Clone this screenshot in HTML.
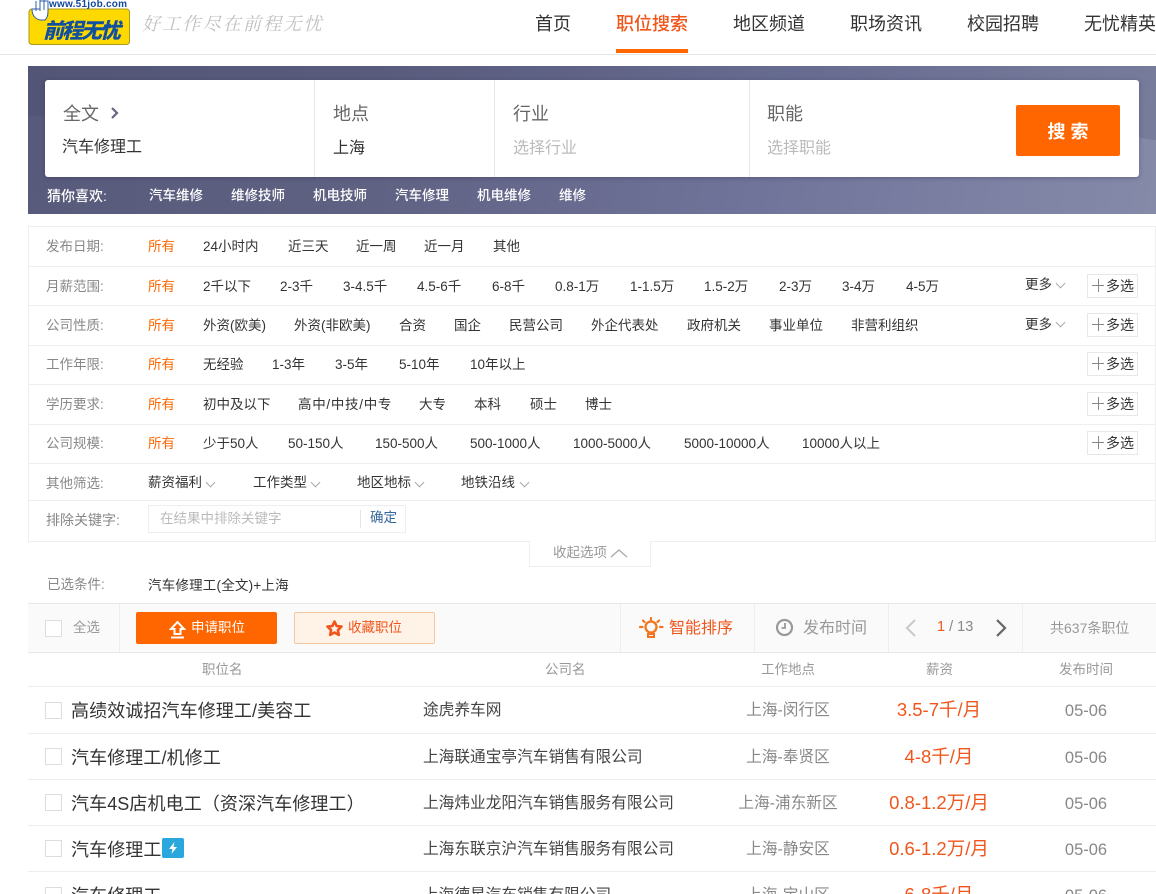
<!DOCTYPE html>
<html lang="zh"><head><meta charset="utf-8"><title>前程无忧</title>
<style>
*{box-sizing:border-box}
html,body{margin:0;padding:0;background:#fff}
html{width:1156px;height:894px;overflow:hidden}
body{position:relative;width:1156px;height:894px;overflow:hidden;font-family:"Liberation Sans","Noto Sans CJK SC",sans-serif;color:#333;font-size:13.5px}
.t{position:absolute;white-space:nowrap;line-height:20px;height:20px}
.c{transform:translateX(-50%)}
.b{position:absolute}
.nav{font-size:18px;top:14px;color:#333}
.l{left:46px;color:#888}
.o{left:148px;color:#f60}
.hl{position:absolute;left:28px;width:1128px;height:1px;background:#eee}
.ms{position:absolute;left:1087px;width:51px;height:24px;border:1px solid #e8e8e8;font-size:14px;line-height:22px;padding-left:18px;color:#333;white-space:nowrap}
.ms:before{content:"";position:absolute;left:4px;top:10px;width:12px;height:1px;background:#888}
.ms:after{content:"";position:absolute;left:9.500px;top:4px;width:1px;height:13px;background:#888}
.cb{position:absolute;left:45px;width:17px;height:17px;border:1px solid #ddd;background:#fff}
.ti{font-size:18px;left:71px;letter-spacing:.1px}
.co{font-size:15.700px;left:423px;color:#444}
.lo{font-size:15.700px;left:788px;color:#888}
.sa{font-size:18.500px;left:939px;color:#f0561c}
.da{font-size:16.500px;left:1086px;color:#888}
.h{color:#999;font-size:13.500px;top:660px}
.ar{position:absolute;width:7px;height:7px;border-right:1px solid #aaa;border-bottom:1px solid #aaa;transform:rotate(45deg)}
.g{top:186px;color:#fff;font-size:13.500px;font-weight:500}
.f{font-size:13.500px}
</style></head><body>

<svg class="b" style="left:28px;top:0" width="104" height="46" viewBox="0 0 104 46">
<rect x="1" y="9" width="100.500" height="35.500" rx="3" fill="#fdd900" stroke="#a99a20"/>
<path d="M4 9c0 6 3 10 8 11h5c2-2 3-4 3-9V1h-8v8z" fill="#fff" stroke="#2f5fa8"/>
<path d="M8 1v10M12 0v11M16 0v10" stroke="#2f5fa8" fill="none"/>
<text x="21" y="7" font-size="10" font-weight="700" fill="#13499a" font-family="Liberation Sans" textLength="78">www.51job.com</text>
<text x="15" y="38" font-size="21" font-weight="900" font-style="italic" fill="#10509f" font-family="Noto Sans CJK SC" textLength="78" lengthAdjust="spacing">前程无忧</text>
</svg>
<div class="t" style="left:142px;top:13px;font-family:'Noto Serif CJK SC',serif;font-size:18px;font-style:italic;letter-spacing:2.200px;color:#bfbfbf">好工作尽在前程无忧</div>

<div class="t nav" style="left:535px">首页</div>
<div class="t nav" style="left:616px;color:#f0561c;font-weight:500">职位搜索</div>
<div class="b" style="left:616px;top:49px;width:72px;height:4px;background:#f60"></div>
<div class="t nav" style="left:733px">地区频道</div>
<div class="t nav" style="left:850px">职场资讯</div>
<div class="t nav" style="left:967px">校园招聘</div>
<div class="t nav" style="left:1084px">无忧精英</div>
<div class="b" style="left:0;top:54px;width:1156px;height:1px;background:#e8e8e8"></div>

<div class="b" style="left:28px;top:66px;width:1128px;height:148px;background:linear-gradient(100deg,#585a7b 0%,#5f6182 30%,#70749a 65%,#868aa9 100%)"></div>
<svg class="b" style="left:28px;top:66px" width="1128" height="148"><polygon points="0,0 1128,0 1128,74 1050,64 0,50" fill="#3f4062" opacity=".18"/></svg>
<div class="b" style="left:45px;top:80px;width:1094px;height:97px;background:#fff;border-radius:3px;box-shadow:0 1px 5px rgba(40,40,70,.35)"></div>
<div class="b" style="left:314px;top:80px;width:1px;height:97px;background:#e6e6e6"></div>
<div class="b" style="left:494px;top:80px;width:1px;height:97px;background:#e6e6e6"></div>
<div class="b" style="left:749px;top:80px;width:1px;height:97px;background:#e6e6e6"></div>
<div class="t" style="left:63px;top:104px;font-size:18px;color:#666">全文</div>
<svg class="b" style="left:110px;top:106px" width="11" height="14"><path d="M2 2l5 5-5 5" fill="none" stroke="#666680" stroke-width="2.200"/></svg>
<div class="t" style="left:333px;top:104px;font-size:18px;color:#666">地点</div>
<div class="t" style="left:513px;top:104px;font-size:18px;color:#666">行业</div>
<div class="t" style="left:767px;top:104px;font-size:18px;color:#666">职能</div>
<div class="t" style="left:62px;top:138px;font-size:16px;color:#333">汽车修理工</div>
<div class="t" style="left:333px;top:139px;font-size:16px;color:#333">上海</div>
<div class="t" style="left:513px;top:139px;font-size:16px;color:#bbb">选择行业</div>
<div class="t" style="left:767px;top:139px;font-size:16px;color:#bbb">选择职能</div>
<div class="b" style="left:1016px;top:105px;width:104px;height:51px;background:#f60;border-radius:2px;color:#fff;font-size:18px;font-weight:700;line-height:54px;text-align:center">搜 索</div>

<div class="t g" style="left:47px;font-size:14px;top:186px">猜你喜欢:</div>
<div class="t g" style="left:149px">汽车维修</div>
<div class="t g" style="left:231px">维修技师</div>
<div class="t g" style="left:313px">机电技师</div>
<div class="t g" style="left:395px">汽车修理</div>
<div class="t g" style="left:477px">机电维修</div>
<div class="t g" style="left:559px">维修</div>

<div class="hl" style="top:226px"></div>
<div class="hl" style="top:266px"></div>
<div class="hl" style="top:305px"></div>
<div class="hl" style="top:345px"></div>
<div class="hl" style="top:384px"></div>
<div class="hl" style="top:424px"></div>
<div class="hl" style="top:463px"></div>
<div class="hl" style="top:500px"></div>
<div class="hl" style="top:541px;width:501px"></div>
<div class="b" style="left:651px;top:541px;width:505px;height:1px;background:#eee"></div>
<div class="b" style="left:28px;top:226px;width:1px;height:316px;background:#eee"></div>
<div class="b" style="left:1155px;top:226px;width:1px;height:316px;background:#eee"></div>

<div class="t l" style="top:237px">发布日期:</div><div class="t o" style="top:237px">所有</div>
<div class="t f" style="top:237px;left:203px">24小时内</div><div class="t f" style="top:237px;left:288px">近三天</div><div class="t f" style="top:237px;left:356px">近一周</div><div class="t f" style="top:237px;left:424px">近一月</div><div class="t f" style="top:237px;left:493px">其他</div>

<div class="t l" style="top:277px">月薪范围:</div><div class="t o" style="top:277px">所有</div>
<div class="t f" style="top:277px;left:203px">2千以下</div><div class="t f" style="top:277px;left:280px">2-3千</div><div class="t f" style="top:277px;left:343px">3-4.5千</div><div class="t f" style="top:277px;left:417px">4.5-6千</div><div class="t f" style="top:277px;left:492px">6-8千</div><div class="t f" style="top:277px;left:555px">0.8-1万</div><div class="t f" style="top:277px;left:630px">1-1.5万</div><div class="t f" style="top:277px;left:704px">1.5-2万</div><div class="t f" style="top:277px;left:779px">2-3万</div><div class="t f" style="top:277px;left:842px">3-4万</div><div class="t f" style="top:277px;left:906px">4-5万</div>
<div class="t f" style="top:275px;left:1025px">更多</div><div class="ar" style="left:1057px;top:280px"></div><div class="ms" style="top:274px">多选</div>

<div class="t l" style="top:316px">公司性质:</div><div class="t o" style="top:316px">所有</div>
<div class="t f" style="top:316px;left:203px">外资(欧美)</div><div class="t f" style="top:316px;left:294px">外资(非欧美)</div><div class="t f" style="top:316px;left:399px">合资</div><div class="t f" style="top:316px;left:454px">国企</div><div class="t f" style="top:316px;left:509px">民营公司</div><div class="t f" style="top:316px;left:591px">外企代表处</div><div class="t f" style="top:316px;left:687px">政府机关</div><div class="t f" style="top:316px;left:769px">事业单位</div><div class="t f" style="top:316px;left:851px">非营利组织</div>
<div class="t f" style="top:315px;left:1025px">更多</div><div class="ar" style="left:1057px;top:319px"></div><div class="ms" style="top:313px">多选</div>

<div class="t l" style="top:355px">工作年限:</div><div class="t o" style="top:355px">所有</div>
<div class="t f" style="top:355px;left:203px">无经验</div><div class="t f" style="top:355px;left:272px">1-3年</div><div class="t f" style="top:355px;left:335px">3-5年</div><div class="t f" style="top:355px;left:399px">5-10年</div><div class="t f" style="top:355px;left:470px">10年以上</div>
<div class="ms" style="top:352px">多选</div>

<div class="t l" style="top:395px">学历要求:</div><div class="t o" style="top:395px">所有</div>
<div class="t f" style="top:395px;left:203px">初中及以下</div><div class="t f" style="top:395px;left:298px;letter-spacing:.7px">高中/中技/中专</div><div class="t f" style="top:395px;left:419px">大专</div><div class="t f" style="top:395px;left:474px">本科</div><div class="t f" style="top:395px;left:530px">硕士</div><div class="t f" style="top:395px;left:585px">博士</div>
<div class="ms" style="top:392px">多选</div>

<div class="t l" style="top:434px">公司规模:</div><div class="t o" style="top:434px">所有</div>
<div class="t f" style="top:434px;left:203px">少于50人</div><div class="t f" style="top:434px;left:288px">50-150人</div><div class="t f" style="top:434px;left:375px">150-500人</div><div class="t f" style="top:434px;left:470px">500-1000人</div><div class="t f" style="top:434px;left:573px">1000-5000人</div><div class="t f" style="top:434px;left:684px">5000-10000人</div><div class="t f" style="top:434px;left:802px">10000人以上</div>
<div class="ms" style="top:431px">多选</div>

<div class="t l" style="top:474px">其他筛选:</div>
<div class="t f" style="top:473px;left:148px">薪资福利</div><div class="ar" style="left:207px;top:479px"></div>
<div class="t f" style="top:473px;left:253px">工作类型</div><div class="ar" style="left:312px;top:479px"></div>
<div class="t f" style="top:473px;left:357px">地区地标</div><div class="ar" style="left:416px;top:479px"></div>
<div class="t f" style="top:473px;left:461px">地铁沿线</div><div class="ar" style="left:521px;top:479px"></div>

<div class="t l" style="top:510px;font-size:14px">排除关键字:</div>
<div class="b" style="left:148px;top:505px;width:258px;height:28px;border:1px solid #eee"></div>
<div class="b" style="left:360px;top:510px;width:1px;height:18px;background:#e5e5e5"></div>
<div class="t f" style="top:509px;left:160px;color:#bbb">在结果中排除关键字</div>
<div class="t f" style="top:508px;left:370px;color:#336699">确定</div>

<div class="b" style="left:529px;top:541px;width:122px;height:26px;border:1px solid #eee;border-top:0;background:#fff"></div>
<div class="t f" style="top:543px;left:553px;color:#999">收起选项</div>
<svg class="b" style="left:609px;top:547px" width="20" height="12"><path d="M2 10l8-7 8 7" fill="none" stroke="#aaa" stroke-width="1.300"/></svg>

<div class="t l" style="top:575px;left:47px">已选条件:</div>
<div class="t f" style="top:576px;left:148px;letter-spacing:.2px">汽车修理工(全文)+上海</div>

<div class="b" style="left:28px;top:603px;width:1128px;height:50px;background:#fafafa;border-top:1px solid #e8e8e8;border-bottom:1px solid #e8e8e8"></div>
<div class="b" style="left:119px;top:604px;width:1px;height:48px;background:#eee"></div>
<div class="b" style="left:620px;top:604px;width:1px;height:48px;background:#eee"></div>
<div class="b" style="left:754px;top:604px;width:1px;height:48px;background:#eee"></div>
<div class="b" style="left:888px;top:604px;width:1px;height:48px;background:#eee"></div>
<div class="b" style="left:1022px;top:604px;width:1px;height:48px;background:#eee"></div>
<div class="cb" style="top:620px"></div>
<div class="t f" style="top:618px;left:73px;color:#999">全选</div>
<div class="b" style="left:136px;top:612px;width:141px;height:32px;background:#f60;border-radius:2px"></div>
<svg class="b" style="left:169px;top:621px" width="17" height="19"><path d="M8.500 1L15 8h-3.500v5h-6V8H2z" fill="none" stroke="#fff" stroke-width="2"/><path d="M2 16.500h13" stroke="#fff" stroke-width="2"/></svg>
<div class="t f" style="top:618px;left:191px;color:#fff">申请职位</div>
<div class="b" style="left:294px;top:612px;width:141px;height:32px;background:#fff2e6;border:1px solid #f5c8a2;border-radius:2px"></div>
<svg class="b" style="left:325px;top:619px" width="19" height="19"><path d="M9.500 2.500l2.100 4.500 4.900.6-3.600 3.400.9 4.900-4.300-2.400-4.300 2.400.9-4.900L2.500 7.600l4.900-.6z" fill="none" stroke="#f0561c" stroke-width="2.600" stroke-linejoin="round"/></svg>
<div class="t f" style="top:618px;left:348px;color:#f0561c">收藏职位</div>

<svg class="b" style="left:638px;top:617px" width="26" height="24"><circle cx="13" cy="10" r="5.500" fill="none" stroke="#f2761f" stroke-width="2.300"/><path d="M10 17h6v3h-6z" fill="none" stroke="#f2761f" stroke-width="2"/><path d="M13 1v2M5 3.500l1.500 1.500M21 3.500L19.500 5M2 10h2.500M22 10h2.500" stroke="#f2761f" stroke-width="2.200" stroke-linecap="round"/></svg>
<div class="t" style="left:669px;top:619px;font-size:16px;color:#f0561c">智能排序</div>
<svg class="b" style="left:775px;top:618px" width="20" height="20"><circle cx="9.500" cy="9.500" r="7.500" fill="none" stroke="#999" stroke-width="2.200"/><path d="M10 5v5H6.500" fill="none" stroke="#999" stroke-width="1.800"/></svg>
<div class="t" style="left:803px;top:619px;font-size:16px;color:#999">发布时间</div>
<svg class="b" style="left:904px;top:618px" width="14" height="20"><path d="M11 2L3 10l8 8" fill="none" stroke="#ccc" stroke-width="2.200"/></svg>
<div class="t" style="left:937px;top:617px;font-size:14.500px;color:#888"><span style="color:#f0561c">1</span> / 13</div>
<svg class="b" style="left:994px;top:618px" width="14" height="20"><path d="M3 2l8 8-8 8" fill="none" stroke="#666" stroke-width="2.200"/></svg>
<div class="t f" style="top:618px;left:1050px;color:#999;font-size:14px">共637条职位</div>

<div class="t h" style="left:202px">职位名</div>
<div class="t h" style="left:545px">公司名</div>
<div class="t h" style="left:761px">工作地点</div>
<div class="t h" style="left:926px">薪资</div>
<div class="t h" style="left:1059px">发布时间</div>
<div class="hl" style="top:686px"></div>
<div class="hl" style="top:733px"></div>
<div class="hl" style="top:779px"></div>
<div class="hl" style="top:825px"></div>
<div class="hl" style="top:871px"></div>

<div class="cb" style="top:702px"></div>
<div class="t ti" style="top:701px">高绩效诚招汽车修理工/美容工</div>
<div class="t co" style="top:701px">途虎养车网</div>
<div class="t lo c" style="top:701px">上海-闵行区</div>
<div class="t sa c" style="top:700px">3.5-7千/月</div>
<div class="t da c" style="top:701px">05-06</div>

<div class="cb" style="top:748px"></div>
<div class="t ti" style="top:748px">汽车修理工/机修工</div>
<div class="t co" style="top:748px">上海联通宝亭汽车销售有限公司</div>
<div class="t lo c" style="top:748px">上海-奉贤区</div>
<div class="t sa c" style="top:747px">4-8千/月</div>
<div class="t da c" style="top:748px">05-06</div>

<div class="cb" style="top:794px"></div>
<div class="t ti" style="top:794px">汽车4S店机电工（资深汽车修理工）</div>
<div class="t co" style="top:794px">上海炜业龙阳汽车销售服务有限公司</div>
<div class="t lo c" style="top:794px">上海-浦东新区</div>
<div class="t sa c" style="top:793px">0.8-1.2万/月</div>
<div class="t da c" style="top:794px">05-06</div>

<div class="cb" style="top:840px"></div>
<div class="t ti" style="top:840px">汽车修理工</div>
<svg class="b" style="left:162px;top:838px" width="22" height="20"><rect width="22" height="20" rx="2" fill="#2aa7dc"/><path d="M12.500 4L7 11h3.500l-1 5L15 9h-3.500z" fill="#fff"/></svg>
<div class="t co" style="top:840px">上海东联京沪汽车销售服务有限公司</div>
<div class="t lo c" style="top:840px">上海-静安区</div>
<div class="t sa c" style="top:839px">0.6-1.2万/月</div>
<div class="t da c" style="top:840px">05-06</div>

<div class="cb" style="top:887px"></div>
<div class="t ti" style="top:886px">汽车修理工</div>
<div class="t co" style="top:886px">上海德星汽车销售有限公司</div>
<div class="t lo c" style="top:886px">上海-宝山区</div>
<div class="t sa c" style="top:885px">6-8千/月</div>
<div class="t da c" style="top:886px">05-06</div>
</body></html>
